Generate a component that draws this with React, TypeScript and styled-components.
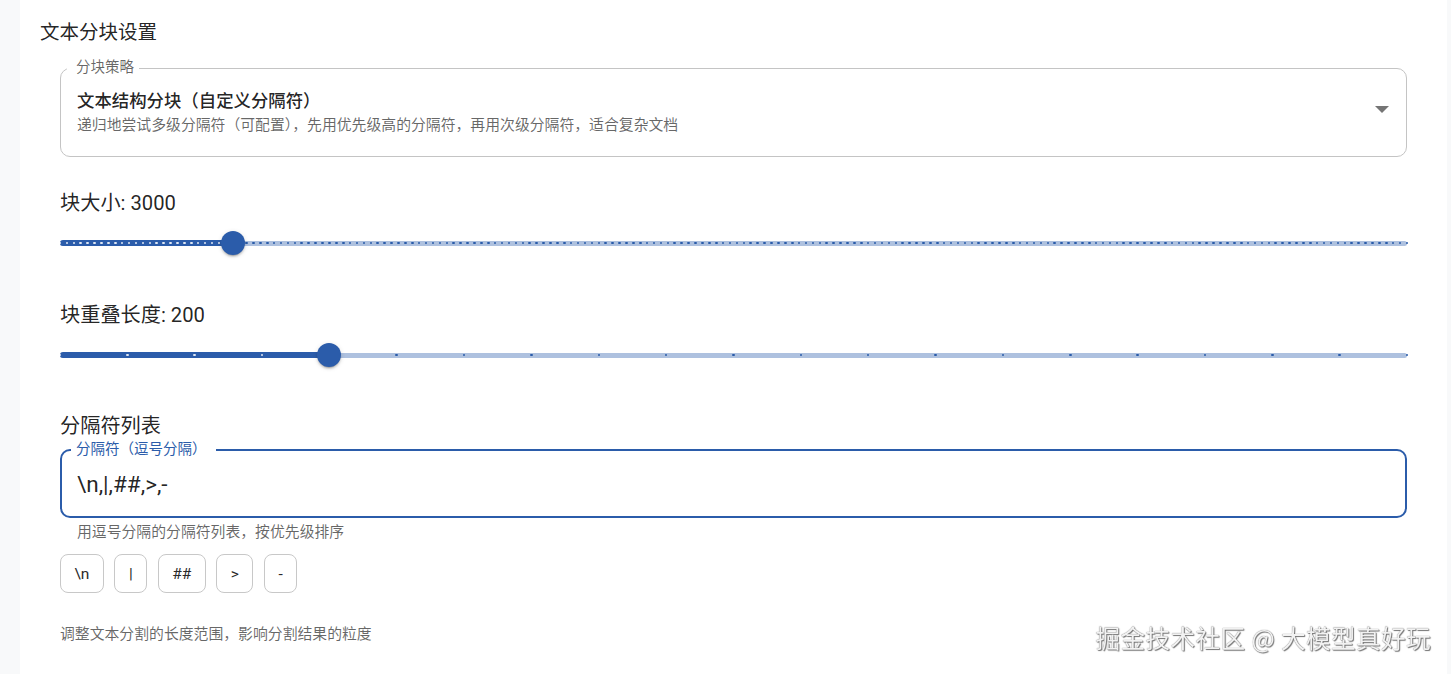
import React from "react";
import styled, { createGlobalStyle } from "styled-components";

const PRIMARY = "#2b5caa";
const FONT = `"Roboto", "Noto Sans CJK SC", sans-serif`;

const GlobalStyle = createGlobalStyle`
  html, body {
    margin: 0;
    padding: 0;
    background: #f8f9fa;
    font-family: ${FONT};
  }
  * { box-sizing: border-box; }
`;

const Page = styled.div`
  display: flex;
  min-height: 100vh;
  padding: 0 4px 0 20px;
`;

const Card = styled.section`
  flex: 1;
  background: #ffffff;
  padding: 19px 20px 40px 20px;
  display: flex;
  flex-direction: column;
`;

const Title = styled.h2`
  margin: 0;
  font-size: 19.5px;
  line-height: 28px;
  font-weight: 400;
  color: rgba(0, 0, 0, 0.87);
`;

const Body = styled.div`
  display: flex;
  flex-direction: column;
  padding: 0 20px;
`;

const Outline = styled.fieldset<{ $focused?: boolean; $top: number }>`
  margin: ${(p) => p.$top}px 0 0 0;
  padding: 0;
  min-width: 0;
  border: ${(p) => (p.$focused ? `2px solid ${PRIMARY}` : "1px solid #c4c4c4")};
  border-radius: 10px;
`;

const Legend = styled.legend<{ $focused?: boolean }>`
  margin-left: ${(p) => (p.$focused ? 9 : 6)}px;
  padding: ${(p) => (p.$focused ? "0 9px 0 5px" : "0 5px 0 9px")};
  font-size: 14.5px;
  line-height: 14px;
  color: ${(p) => (p.$focused ? PRIMARY : "rgba(0,0,0,0.6)")};
`;

const SelectRow = styled.div`
  display: flex;
  align-items: center;
  padding: 14px 16px 21px 16px;
`;

const SelectText = styled.div`
  flex: 1;
  display: flex;
  flex-direction: column;
  gap: 2px;
`;

const SelectValue = styled.div`
  font-size: 17.4px;
  line-height: 24px;
  font-weight: 500;
  color: rgba(0, 0, 0, 0.87);
`;

const SelectDesc = styled.div`
  font-size: 14.85px;
  line-height: 20px;
  color: rgba(0, 0, 0, 0.6);
`;

const Caret = styled.svg`
  width: 14px;
  height: 8px;
  margin-top: -4px;
  margin-right: 1px;
  fill: #757575;
`;

const FieldLabel = styled.div<{ $top: number }>`
  margin-top: ${(p) => p.$top}px;
  font-size: 20.2px;
  line-height: 28px;
  color: rgba(0, 0, 0, 0.87);
`;

const SliderRoot = styled.div`
  position: relative;
  height: 52px;
`;

const Rail = styled.div`
  position: absolute;
  left: 0;
  right: 0;
  top: 50%;
  height: 5px;
  margin-top: -2.5px;
  border-radius: 3px;
  background: ${PRIMARY};
  opacity: 0.38;
`;

const Track = styled.div`
  position: absolute;
  left: 0;
  top: 50%;
  height: 6px;
  margin-top: -3px;
  border-radius: 3px;
  background: ${PRIMARY};
`;

const Mark = styled.span<{ $active: boolean }>`
  position: absolute;
  top: 50%;
  width: 2.6px;
  height: 2.6px;
  margin: -1.3px 0 0 -1.3px;
  border-radius: 1px;
  background: ${(p) => (p.$active ? "rgba(255,255,255,0.85)" : PRIMARY)};
`;

const Thumb = styled.span`
  position: absolute;
  top: 50%;
  width: 24px;
  height: 24px;
  margin: -12px 0 0 -12px;
  border-radius: 50%;
  background: ${PRIMARY};
  box-shadow: 0 3px 1px -2px rgba(0, 0, 0, 0.2), 0 2px 2px 0 rgba(0, 0, 0, 0.14),
    0 1px 5px 0 rgba(0, 0, 0, 0.12);
`;

type SliderProps = { min: number; max: number; step: number; value: number };

function Slider({ min, max, step, value }: SliderProps) {
  const steps = Math.round((max - min) / step);
  const pct = ((value - min) / (max - min)) * 100;
  return (
    <SliderRoot>
      <Rail />
      <Track style={{ width: `${pct}%` }} />
      {Array.from({ length: steps + 1 }, (_, i) => {
        const at = (i / steps) * 100;
        return <Mark key={i} $active={at <= pct} style={{ left: `${at}%` }} />;
      })}
      <Thumb style={{ left: `${pct}%` }} />
    </SliderRoot>
  );
}

const InputWrap = styled.div`
  padding: 13px 16px 18px 15px;
`;

const Input = styled.input`
  display: block;
  width: 100%;
  height: 28px;
  border: none;
  outline: none;
  padding: 0;
  background: transparent;
  font-family: ${FONT};
  font-size: 22.5px;
  line-height: 28px;
  color: rgba(0, 0, 0, 0.87);
`;

const Helper = styled.div<{ $indent?: boolean; $top: number }>`
  margin-top: ${(p) => p.$top}px;
  padding-left: ${(p) => (p.$indent ? 17 : 0)}px;
  font-size: 14.85px;
  line-height: 20px;
  color: rgba(0, 0, 0, 0.6);
`;

const ChipRow = styled.div`
  display: flex;
  gap: 10.5px;
  margin-top: 12px;
`;

const Chip = styled.span`
  display: inline-flex;
  align-items: center;
  justify-content: center;
  height: 39px;
  padding: 0 13.5px;
  border: 1px solid #c8c8c8;
  border-radius: 8px;
  background: #ffffff;
  font-family: ${FONT};
  font-size: 15.5px;
  color: #2a2a2a;
  cursor: pointer;
`;

const Watermark = styled.div`
  position: fixed;
  right: 20px;
  bottom: 22px;
  font-family: "Noto Sans CJK SC", sans-serif;
  font-size: 24.6px;
  line-height: 30px;
  color: #f2f2f2;
  text-shadow: 0 0 1px #555, 1px 1px 1px #777;
  letter-spacing: 0.4px;
`;

const separators = ["\\n", "|", "##", ">", "-"];

export default function App() {
  return (
    <>
      <GlobalStyle />
      <Page>
        <Card>
          <Title>文本分块设置</Title>
          <Body>
            <Outline $top={14}>
              <Legend>分块策略</Legend>
              <SelectRow>
                <SelectText>
                  <SelectValue>文本结构分块（自定义分隔符）</SelectValue>
                  <SelectDesc>
                    递归地尝试多级分隔符（可配置），先用优先级高的分隔符，再用次级分隔符，适合复杂文档
                  </SelectDesc>
                </SelectText>
                <Caret viewBox="0 0 14 8">
                  <path d="M0 0 L14 0 L7 7 Z" />
                </Caret>
              </SelectRow>
            </Outline>

            <FieldLabel $top={32}>块大小: 3000</FieldLabel>
            <Slider min={500} max={20000} step={100} value={3000} />

            <FieldLabel $top={32}>块重叠长度: 200</FieldLabel>
            <Slider min={0} max={1000} step={50} value={200} />

            <FieldLabel $top={31}>分隔符列表</FieldLabel>
            <Outline $focused $top={3}>
              <Legend $focused>分隔符（逗号分隔）</Legend>
              <InputWrap>
                <Input readOnly value={"\\n,|,##,>,-"} />
              </InputWrap>
            </Outline>
            <Helper $indent $top={4}>
              用逗号分隔的分隔符列表，按优先级排序
            </Helper>
            <ChipRow>
              {separators.map((s) => (
                <Chip key={s} role="button">
                  {s}
                </Chip>
              ))}
            </ChipRow>
            <Helper $top={31}>调整文本分割的长度范围，影响分割结果的粒度</Helper>
          </Body>
        </Card>
      </Page>
      <Watermark>掘金技术社区 @ 大模型真好玩</Watermark>
    </>
  );
}
